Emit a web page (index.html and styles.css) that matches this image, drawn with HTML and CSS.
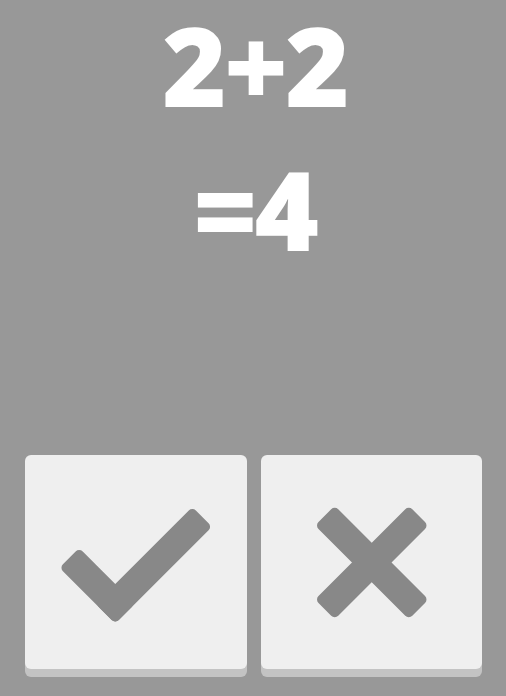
FILE: index.html
```html
<!DOCTYPE html>
<html lang="en">
<head>
<meta charset="utf-8">
<title>Quiz</title>
<link rel="stylesheet" href="styles.css">
</head>
<body>
<main class="app">
  <section class="problem">
    <div class="line">2+2</div>
    <div class="line">=4</div>
  </section>
  <section class="answers">
    <button class="answer" type="button" aria-label="Correct">
      <svg class="icon" viewBox="0 0 221 214" width="221" height="214">
        <g fill="#888888" transform="translate(90 148.8)">
          <rect x="-14" y="-14" width="79" height="28" rx="5" transform="rotate(-135)"/>
          <rect x="-14" y="-14" width="137" height="28" rx="5" transform="rotate(-45)"/>
        </g>
      </svg>
    </button>
    <button class="answer" type="button" aria-label="Wrong">
      <svg class="icon" viewBox="0 0 222 214" width="222" height="214">
        <g fill="#888888" transform="translate(111 107.5)">
          <rect x="-66.5" y="-14" width="133" height="28" rx="5" transform="rotate(45)"/>
          <rect x="-66.5" y="-14" width="133" height="28" rx="5" transform="rotate(-45)"/>
        </g>
      </svg>
    </button>
  </section>
</main>
</body>
</html>
```
FILE: styles.css
```css
html, body {
  margin: 0;
  padding: 0;
  background: #989898;
}

.app {
  height: 696px;
  display: flex;
  flex-direction: column;
  overflow: hidden;
}

.problem {
  display: flex;
  flex-direction: column;
  align-items: center;
  gap: 16px;
  color: #ffffff;
  font-family: "Open Sans", "DejaVu Sans", sans-serif;
  font-weight: 800;
  font-size: 110px;
}

.line {
  line-height: 128px;
  letter-spacing: -3px;
  padding-left: 3px;
}

.answers {
  margin-top: auto;
  display: flex;
  gap: 14px;
  padding: 0 24px 19px 25px;
}

.answer {
  flex: 1 1 0;
  height: 214px;
  margin: 0 0 8px 0;
  padding: 0;
  border: none;
  border-radius: 6px;
  background: #efefef;
  box-shadow: 0 8px 0 #c3c3c3;
  display: flex;
  align-items: center;
  justify-content: center;
  cursor: pointer;
}

.icon {
  display: block;
  width: 100%;
  height: 100%;
}
```
